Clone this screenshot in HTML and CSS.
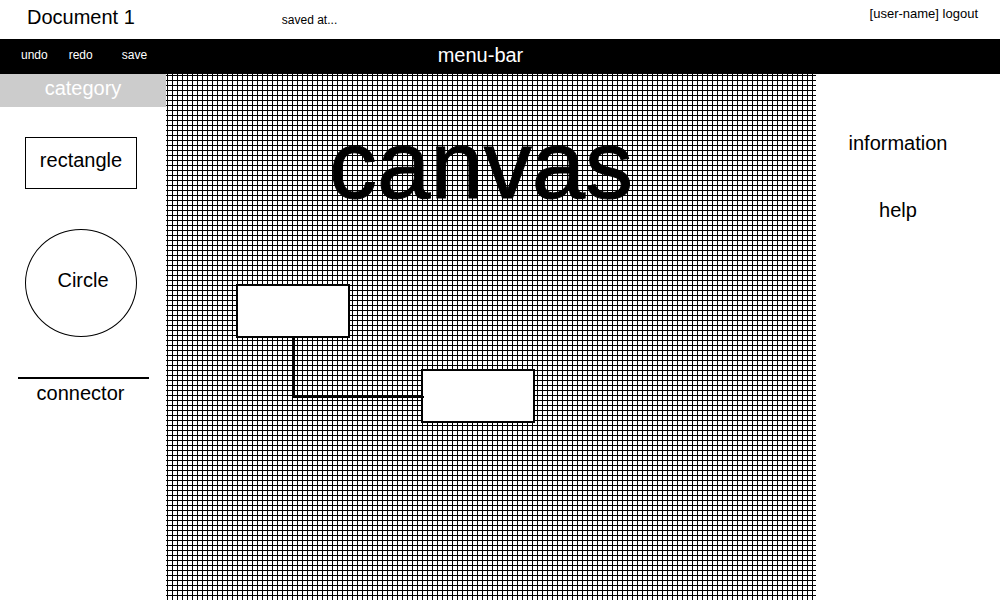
FILE: index.html
```html
<!DOCTYPE html>
<html lang="en">
<head>
<meta charset="utf-8">
<title>Document 1</title>
<link rel="stylesheet" href="styles.css">
</head>
<body>
<div class="app">
  <header class="header">
    <h1 class="title">Document 1</h1>
    <span class="saved">saved at...</span>
    <div class="account">[user-name] <a class="logout" href="#">logout</a></div>
  </header>
  <nav class="menu">
    <div class="actions">
      <button class="action" type="button">undo</button>
      <button class="action" type="button">redo</button>
      <button class="action save" type="button">save</button>
    </div>
    <span class="menu-name">menu-bar</span>
  </nav>
  <div class="workspace">
    <aside class="palette">
      <h2 class="category">category</h2>
      <div class="shapes">
        <button class="shape rectangle" type="button">rectangle</button>
        <button class="shape circle" type="button">Circle</button>
        <button class="connector" type="button">connector</button>
      </div>
    </aside>
    <main class="canvas">
      <h2 class="canvas-name">canvas</h2>
      <div class="node node-first"></div>
      <div class="node node-second"></div>
      <div class="link"></div>
    </main>
    <aside class="side">
      <a class="side-link" href="#">information</a>
      <a class="side-link" href="#">help</a>
    </aside>
  </div>
</div>
</body>
</html>
```
FILE: styles.css
```css
* {
  box-sizing: border-box;
}

body {
  margin: 0;
  background: #fff;
  color: #000;
  font-family: "Liberation Sans", Arial, Helvetica, sans-serif;
  font-size: 20px;
  line-height: 24px;
}

button {
  padding: 0;
  border: 0;
  background: none;
  color: inherit;
  font: inherit;
  cursor: pointer;
}

a {
  color: inherit;
  text-decoration: none;
}

h1,
h2 {
  margin: 0;
  font-size: 20px;
  font-weight: 400;
}

.app {
  display: flex;
  flex-direction: column;
  min-height: 100vh;
}

.header {
  display: flex;
  align-items: flex-start;
  padding: 5px 22px 7px 27px;
}

.saved {
  margin-left: 147px;
  padding-top: 3px;
  font-size: 12px;
}

.account {
  margin-left: auto;
  font-size: 13px;
  line-height: 18px;
}

.menu {
  display: grid;
  grid-template-columns: 1fr auto 1fr;
  align-items: center;
  padding: 4px 60px 7px 21px;
  background: #000;
  color: #fff;
}

.actions {
  display: flex;
  gap: 21px;
}

.action {
  font-size: 12px;
}

.save {
  margin-left: 8px;
}

.workspace {
  display: grid;
  grid-template-columns: 166px 1fr 184px;
  flex: 1;
}

.category {
  padding: 2px 0 7px;
  background: #ccc;
  color: #fff;
  text-align: center;
}

.shapes {
  display: flex;
  flex-direction: column;
  align-items: flex-start;
  gap: 40px;
  padding: 30px 17px 20px 18px;
}

.shape {
  width: 112px;
  margin-left: 7px;
}

.rectangle {
  height: 52px;
  padding-bottom: 6px;
  border: 1px solid #000;
}

.circle {
  height: 108px;
  padding: 0 0 7px 4px;
  border: 1px solid #000;
  border-radius: 50%;
}

.connector {
  width: 100%;
  padding: 2px 6px 0 0;
  border-top: 2px solid #000;
}

.canvas {
  position: relative;
  overflow: hidden;
  background-color: #fff;
  background-image:
    linear-gradient(to right, #000 1px, transparent 1px),
    linear-gradient(to bottom, #000 1px, transparent 1px);
  background-position: 1px 1px;
  background-size: 5px 5px;
}

.canvas-name {
  padding: 35px 20px 0 0;
  font-size: 96px;
  line-height: 112px;
  text-align: center;
  -webkit-text-stroke: 1px #000;
}

.node {
  position: absolute;
  width: 114px;
  height: 54px;
  border: 2px solid #000;
  background: #fff;
}

.node-first {
  left: 70px;
  top: 210px;
}

.node-second {
  left: 255px;
  top: 295px;
}

.link {
  position: absolute;
  left: 127px;
  top: 264px;
  width: 131px;
  height: 60px;
  border: solid #000;
  border-width: 0 0 2px 2px;
}

.side {
  display: flex;
  flex-direction: column;
  align-items: center;
  gap: 43px;
  padding: 57px 20px 20px 0;
}
```
